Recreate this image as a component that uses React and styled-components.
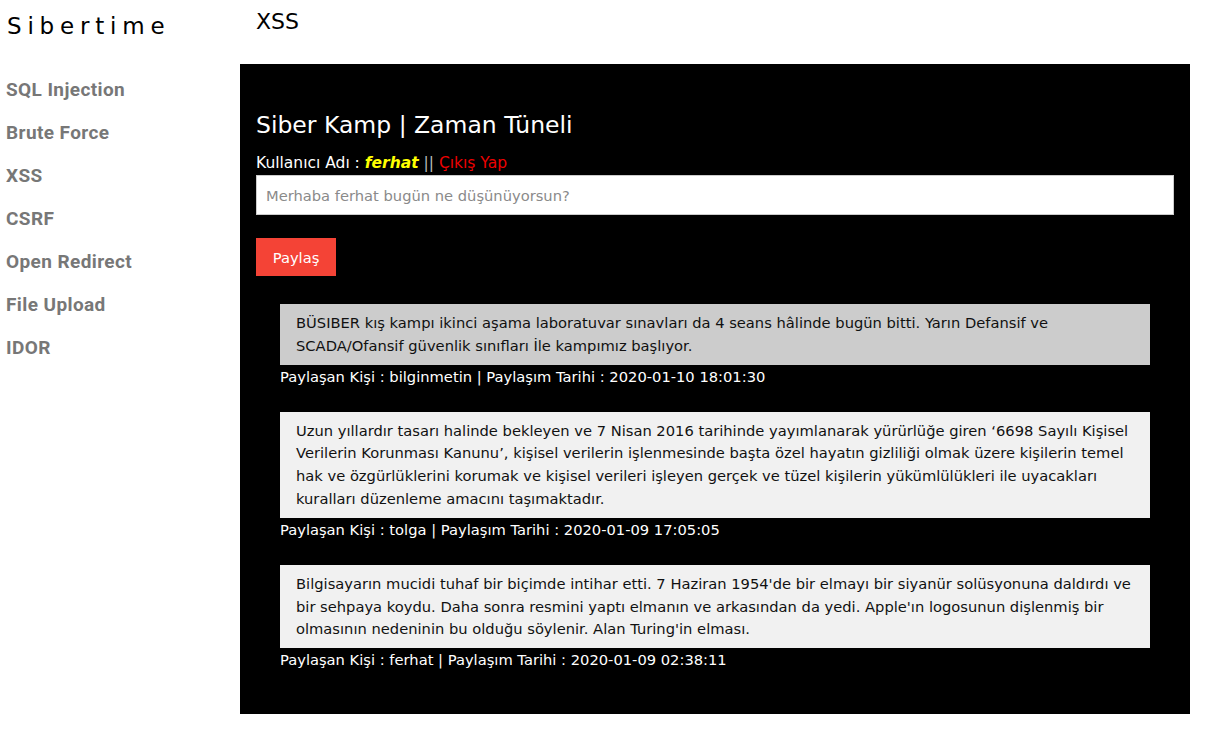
import styled, { createGlobalStyle } from 'styled-components';

const GlobalStyle = createGlobalStyle`
  html, body {
    margin: 0;
    padding: 0;
    background: #fff;
  }
  body {
    font-family: "DejaVu Sans", "Open Sans", sans-serif;
  }
  * {
    box-sizing: border-box;
  }
`;

const Page = styled.div`
  display: flex;
  width: 1212px;
  min-height: 733px;
`;

const Sidebar = styled.nav`
  width: 240px;
  flex-shrink: 0;
  padding: 11px 0 0 7px;
`;

const Brand = styled.div`
  font-family: "DejaVu Sans", sans-serif;
  font-size: 23px;
  letter-spacing: 5.8px;
  color: #000;
  line-height: 30px;
  margin-bottom: 36px;
`;

const NavList = styled.ul`
  list-style: none;
  margin: 0;
  padding: 0;
  display: flex;
  flex-direction: column;
  gap: 18px;
`;

const NavItem = styled.li`
  font-family: Roboto, "Liberation Sans", sans-serif;
  font-weight: 700;
  font-size: 19px;
  letter-spacing: 0.4px;
  line-height: 25px;
  color: #777;
  margin-left: -1px;
`;

const Main = styled.main`
  flex: 1;
  padding-right: 22px;
`;

const PageTitle = styled.h2`
  margin: 0;
  padding: 8px 0 0 16px;
  height: 64px;
  font-family: "DejaVu Sans", sans-serif;
  font-weight: 400;
  font-size: 22px;
  line-height: 28px;
  color: #000;
`;

const Panel = styled.section`
  background: #000;
  height: 650px;
  padding: 46px 16px 0 16px;
  font-family: "DejaVu Sans", sans-serif;
  font-size: 14.7px;
`;

const PanelTitle = styled.h1`
  margin: 0;
  font-weight: 400;
  font-size: 23.5px;
  line-height: 30px;
  color: #fff;
`;

const UserLine = styled.div`
  margin-top: 14px;
  line-height: 19px;
  font-size: 15.5px;
  color: #fff;
`;

const UserName = styled.em`
  color: #ff0;
  font-weight: 700;
`;

const Sep = styled.span`
  color: #bbb;
`;

const Logout = styled.a`
  color: #e00;
  text-decoration: none;
`;

const PostInput = styled.input`
  display: block;
  width: 100%;
  height: 40px;
  margin-top: 2px;
  border: 1px solid #ccc;
  background: #fff;
  padding: 0 9px;
  font-family: inherit;
  font-size: 14.7px;
  outline: none;
  &::placeholder {
    color: #8a8a8a;
  }
`;

const ShareButton = styled.button`
  display: block;
  margin-top: 23px;
  width: 80px;
  height: 38px;
  border: 0;
  background: #f44336;
  color: #fff;
  font-family: inherit;
  font-size: 14.7px;
  padding: 0;
`;

const Feed = styled.div`
  margin: 28px 24px 0 24px;
  display: flex;
  flex-direction: column;
  gap: 24px;
`;

const Post = styled.article``;

const PostBody = styled.p`
  margin: 0;
  padding: 8px 16px 7px 16px;
  background: ${(p) => (p.$dim ? '#ccc' : '#f1f1f1')};
  color: #111;
  line-height: 22.8px;
`;

const PostMeta = styled.div`
  color: #fff;
  line-height: 23px;
`;

const posts = [
  {
    dim: true,
    text: 'BÜSIBER kış kampı ikinci aşama laboratuvar sınavları da 4 seans hâlinde bugün bitti. Yarın Defansif ve SCADA/Ofansif güvenlik sınıfları İle kampımız başlıyor.',
    author: 'bilginmetin',
    date: '2020-01-10 18:01:30',
  },
  {
    text: 'Uzun yıllardır tasarı halinde bekleyen ve 7 Nisan 2016 tarihinde yayımlanarak yürürlüğe giren ‘6698 Sayılı Kişisel Verilerin Korunması Kanunu’, kişisel verilerin işlenmesinde başta özel hayatın gizliliği olmak üzere kişilerin temel hak ve özgürlüklerini korumak ve kişisel verileri işleyen gerçek ve tüzel kişilerin yükümlülükleri ile uyacakları kuralları düzenleme amacını taşımaktadır.',
    author: 'tolga',
    date: '2020-01-09 17:05:05',
  },
  {
    text: "Bilgisayarın mucidi tuhaf bir biçimde intihar etti. 7 Haziran 1954'de bir elmayı bir siyanür solüsyonuna daldırdı ve bir sehpaya koydu. Daha sonra resmini yaptı elmanın ve arkasından da yedi. Apple'ın logosunun dişlenmiş bir olmasının nedeninin bu olduğu söylenir. Alan Turing'in elması.",
    author: 'ferhat',
    date: '2020-01-09 02:38:11',
  },
];

const navItems = ['SQL Injection', 'Brute Force', 'XSS', 'CSRF', 'Open Redirect', 'File Upload', 'IDOR'];

export default function App() {
  return (
    <>
      <GlobalStyle />
      <Page>
        <Sidebar>
          <Brand>Sibertime</Brand>
          <NavList>
            {navItems.map((n) => (
              <NavItem key={n}>{n}</NavItem>
            ))}
          </NavList>
        </Sidebar>
        <Main>
          <PageTitle>XSS</PageTitle>
          <Panel>
            <PanelTitle>Siber Kamp | Zaman Tüneli</PanelTitle>
            <UserLine>
              Kullanıcı Adı : <UserName>ferhat</UserName> <Sep>||</Sep> <Logout href="#">Çıkış Yap</Logout>
            </UserLine>
            <PostInput placeholder="Merhaba ferhat bugün ne düşünüyorsun?" />
            <ShareButton>Paylaş</ShareButton>
            <Feed>
              {posts.map((p) => (
                <Post key={p.date}>
                  <PostBody $dim={p.dim}>{p.text}</PostBody>
                  <PostMeta>
                    Paylaşan Kişi : {p.author} | Paylaşım Tarihi : {p.date}
                  </PostMeta>
                </Post>
              ))}
            </Feed>
          </Panel>
        </Main>
      </Page>
    </>
  );
}
